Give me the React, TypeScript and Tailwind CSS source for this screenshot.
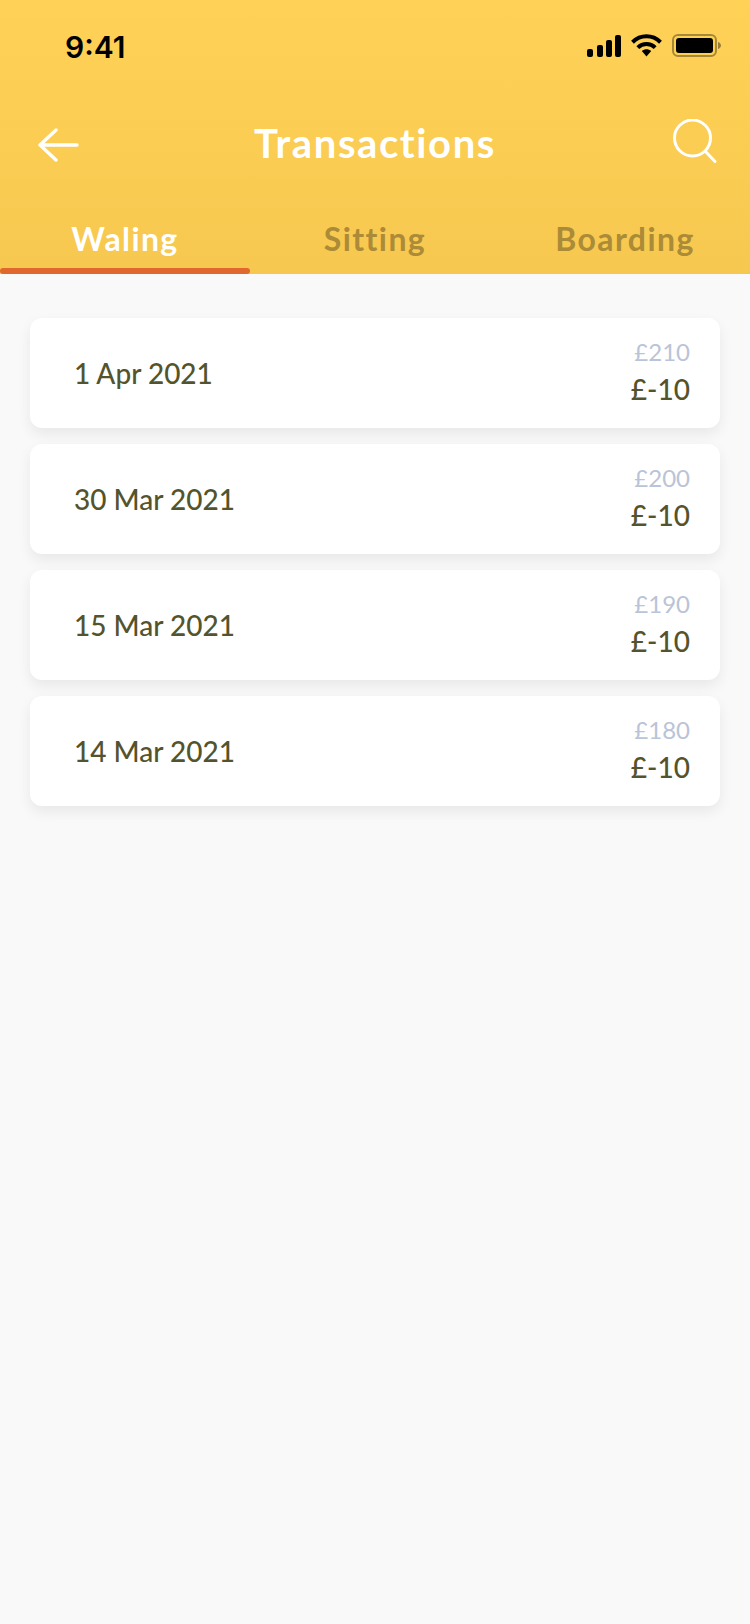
import React from "react";

const transactions = [
  { date: "1 Apr 2021", balance: "£210", amount: "£-10" },
  { date: "30 Mar 2021", balance: "£200", amount: "£-10" },
  { date: "15 Mar 2021", balance: "£190", amount: "£-10" },
  { date: "14 Mar 2021", balance: "£180", amount: "£-10" },
];

function StatusIcons() {
  return (
    <div className="flex items-center">
      <svg width="34" height="22" viewBox="0 0 34 22" fill="#000">
        <rect x="0" y="14" width="6" height="8" rx="2" />
        <rect x="10" y="10" width="6" height="12" rx="2" />
        <rect x="19" y="5" width="6" height="17" rx="2" />
        <rect x="28" y="0" width="6" height="22" rx="2" />
      </svg>
      <svg className="ml-[10px]" width="31" height="23" viewBox="0 0 31 23" fill="none" stroke="#000" strokeWidth="4">
        <path d="M1.5 8.2C9.5 0.4 21.5 0.4 29.5 8.2" />
        <path d="M6.8 13.6C11.8 8.8 19.2 8.8 24.2 13.6" />
        <path d="M10.8 17L15.5 22.6L20.2 17C17.4 14.8 13.6 14.8 10.8 17Z" fill="#000" stroke="none" />
      </svg>
      <svg className="ml-[10px]" width="49" height="23" viewBox="0 0 49 23" fill="none">
        <rect x="1" y="1" width="43" height="21" rx="5" stroke="#000" strokeOpacity="0.35" strokeWidth="2" />
        <rect x="4" y="4" width="37" height="15" rx="3" fill="#000" />
        <path d="M46 8C47.8 8.6 49 10 49 11.5C49 13 47.8 14.4 46 15Z" fill="#000" fillOpacity="0.4" />
      </svg>
    </div>
  );
}

function Header() {
  return (
    <header className="h-[274px] bg-gradient-to-b from-[#ffd257] to-[#f7c84f] flex flex-col">
      <div className="h-[103px] flex items-start justify-between pt-[29px] pl-[65px] pr-[29px]">
        <span className="font-['Inter',sans-serif] font-semibold text-[30px] leading-[36px] text-black">9:41</span>
        <div className="pt-[5px]">
          <StatusIcons />
        </div>
      </div>
      <div className="h-[84px] relative flex items-center justify-between pl-[38px] pr-[33px]">
        <svg width="41" height="34" viewBox="0 0 41 34" fill="none" stroke="#fff" strokeWidth="3.4" strokeLinecap="round" strokeLinejoin="round">
          <path d="M39 17H2M18 2L2 17L18 32" />
        </svg>
        <h1 className="absolute inset-x-0 mb-[4px] text-center font-['Lato',sans-serif] font-bold text-[40px] leading-[48px] tracking-[1.6px] text-white">Transactions</h1>
        <svg className="mb-[9px]" width="44" height="44" viewBox="0 0 44 44" fill="none" stroke="#fff" strokeWidth="3" strokeLinecap="round">
          <circle cx="19.5" cy="19" r="18" />
          <path d="M33 33L42 42.5" />
        </svg>
      </div>
      <nav className="flex-1 grid grid-cols-3 font-['Lato',sans-serif] font-bold text-[32px] tracking-[1.4px]">
        <div className="relative flex justify-center pt-[32px] leading-[40px] text-white">
          Waling
          <span className="absolute inset-x-0 bottom-0 h-[6px] rounded-[3px] bg-[#e0682e]" />
        </div>
        <div className="flex justify-center pt-[32px] leading-[40px] text-[#ab8b37]">Sitting</div>
        <div className="flex justify-center pt-[32px] leading-[40px] text-[#ab8b37]">Boarding</div>
      </nav>
    </header>
  );
}

function TransactionCard({ date, balance, amount }: { date: string; balance: string; amount: string }) {
  return (
    <div className="h-[110px] bg-white rounded-[12px] shadow-[0_6px_14px_rgba(0,0,0,0.07)] flex items-center justify-between pl-[44px] pr-[30px] font-['Lato',sans-serif]">
      <span className="text-[28px] leading-[34px] font-medium text-[#53542e]">{date}</span>
      <div className="flex flex-col items-end pb-[4px]">
        <span className="text-[24px] leading-[36px] text-[#b9c4d8]">{balance}</span>
        <span className="text-[28px] leading-[38px] font-medium text-[#53542e]">{amount}</span>
      </div>
    </div>
  );
}

export default function App() {
  return (
    <div className="w-[750px] h-[1624px] bg-[#f9f9f9] overflow-hidden">
      <Header />
      <main className="flex flex-col gap-4 pt-[44px] pl-[30px] pr-[30px]">
        {transactions.map((t) => (
          <TransactionCard key={t.date} {...t} />
        ))}
      </main>
    </div>
  );
}
